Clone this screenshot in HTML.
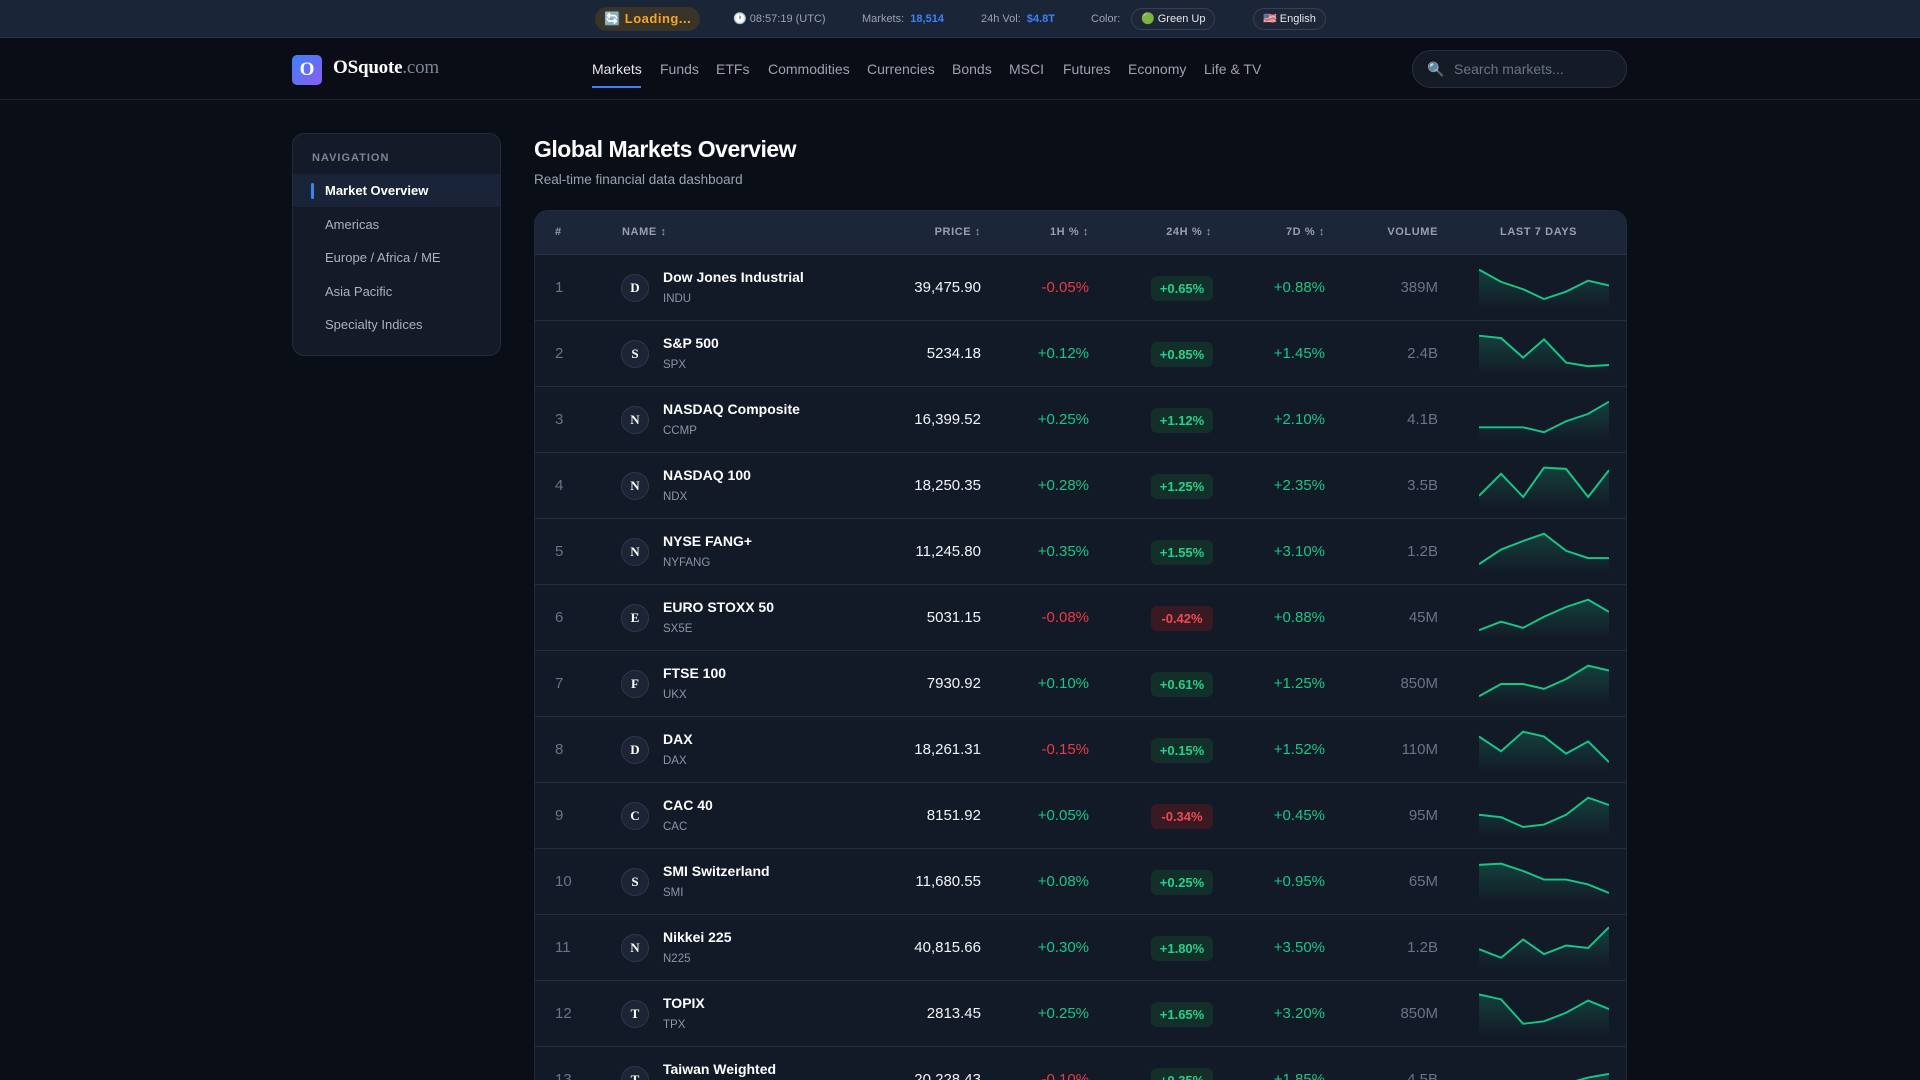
<!DOCTYPE html>
<html><head><meta charset="utf-8"><style>
*{margin:0;padding:0;box-sizing:border-box}
html{width:1920px;height:1080px;overflow:hidden}
body{width:1920px;height:1080px;overflow:hidden;background:#0a0e17;font-family:"Liberation Sans",sans-serif;color:#e5e7eb;position:relative}
.top{position:absolute;left:0;top:0;width:1920px;height:38px;background:#1b2538;border-bottom:1px solid #2a3448;font-size:12px;color:#9aa3b2}
.top>*{position:absolute;top:0;line-height:38px}
.pill{top:7px!important;height:24px;line-height:24px!important;border-radius:12px;padding:0 9px}
.hdr{position:absolute;left:0;top:39px;width:1920px;height:61px;border-bottom:1px solid #1c2230;background:#0a0d15}
.logo{position:absolute;left:292px;top:16px;width:30px;height:30px;border-radius:5px;background:linear-gradient(135deg,#3b82f6,#8b5cf6);color:#fff;font:bold 19px "Liberation Serif",serif;text-align:center;line-height:30px}
.brand{position:absolute;left:333px;top:18px;font:bold 19px "Liberation Serif",serif;color:#fff;letter-spacing:-.2px}
.brand span{color:#7c8596;font-weight:normal}
.nav a{position:absolute;top:22px;font-size:14px;color:#9aa3b2;text-decoration:none}
.nav a.act{color:#e5e7eb}
.search{position:absolute;left:1412px;top:11px;width:215px;height:38px;border-radius:19px;background:#141a26;border:1px solid #283043;font-size:14px;color:#6b7486;line-height:36px;padding-left:41px}
.side{position:absolute;left:292px;top:133px;width:209px;height:223px;border-radius:12px;background:#141a27;border:1px solid #232b3b}
.side .t{position:absolute;left:19px;top:18px;font-size:11px;font-weight:bold;letter-spacing:1px;color:#7c8596}
.side .i{position:absolute;left:0;width:207px;height:33px;line-height:33px;padding-left:32px;font-size:13px;color:#aab2c0}
.side .i.a{background:#1a2438;color:#fff;font-weight:bold}
.side .i.a:before{content:"";position:absolute;left:18px;top:9px;width:3px;height:16px;background:#3b82f6;border-radius:2px}
h1{position:absolute;left:534px;top:136px;font-size:23px;color:#fff;letter-spacing:-.5px}
.sub{position:absolute;left:534px;top:172px;font-size:13.5px;color:#9aa3b2}
.tbl{position:absolute;left:534px;top:210px;width:1093px;height:880px;border-radius:14px;background:#131a27;border:1px solid #242c3c;overflow:hidden}
.th{position:absolute;left:0;top:0;width:100%;height:44px;background:#1c2639;border-bottom:1px solid #2a3446;font-size:11px;font-weight:bold;letter-spacing:.6px;color:#97a0b0}
.th span{position:absolute;top:15px}
.r{position:absolute;left:0;width:100%;height:66px;border-bottom:1px solid #252d3c}
.r>*{position:absolute}
.n{left:20px;top:24px;font-size:15px;color:#6b7486}
.av{left:86px;top:19px;width:28px;height:28px;border-radius:50%;background:#1c2536;border:1px solid #2e384b;color:#fff;font:bold 13px "Liberation Serif",serif;text-align:center;line-height:26px}
.nm{left:128px;top:14px;font-size:14px;font-weight:bold;color:#fff}
.tk{left:128px;top:38px;font-size:11.5px;color:#8c95a5}
.p{right:645px;top:24px;font-size:15px;color:#f1f3f6}
.h{right:537px;top:24px;font-size:15px}
.b{left:616px;top:21px;width:62px;height:25px;border-radius:6px;font-size:13px;font-weight:bold;text-align:center;line-height:25px}
.g{color:#16c784}.rd{color:#ea3943}
.bg{background:#123029;color:#22d18b}.br{background:#3a1a22;color:#f04852}
.d{right:301px;top:24px;font-size:15px;color:#16c784}
.v{right:188px;top:24px;font-size:15px;color:#6b7486}
.sp{left:944px;top:0}
</style></head><body>
<div class="top">
<span class="pill" style="left:595px;background:#3a3428;color:#f5a623;font-weight:bold;font-size:13px;letter-spacing:.5px">🔄 Loading...</span>
<span style="left:733px;font-size:11px">🕐 08:57:19 (UTC)</span>
<span style="left:862px;font-size:11px">Markets:&nbsp; <b style="color:#3b82f6">18,514</b></span>
<span style="left:981px;font-size:11px">24h Vol:&nbsp; <b style="color:#3b82f6">$4.8T</b></span>
<span style="left:1091px;font-size:11px">Color:</span>
<span class="pill" style="left:1131px;height:22px;line-height:20px!important;top:8px!important;background:#1e2738;border:1px solid #354055;color:#e5e7eb;font-size:11px">🟢 Green Up</span>
<span class="pill" style="left:1253px;height:22px;line-height:20px!important;top:8px!important;background:#1e2738;border:1px solid #354055;color:#e5e7eb;font-size:11px">🇺🇸 English</span>
</div>
<div class="hdr">
<div class="logo">O</div><div class="brand">OSquote<span>.com</span></div>
<div class="nav">
<a class="act" style="left:592px">Markets</a><div style="position:absolute;left:592px;top:47px;width:49px;height:2px;background:#3b82f6"></div>
<a style="left:660px">Funds</a><a style="left:716px">ETFs</a><a style="left:768px">Commodities</a><a style="left:867px">Currencies</a><a style="left:952px">Bonds</a><a style="left:1009px">MSCI</a><a style="left:1063px">Futures</a><a style="left:1128px">Economy</a><a style="left:1204px">Life &amp; TV</a>
</div>
<div class="search"><span style="position:absolute;left:14px;top:0">🔍</span>Search markets...</div>
</div>
<div class="side"><div class="t">NAVIGATION</div>
<div class="i a" style="top:40px">Market Overview</div>
<div class="i" style="top:74px">Americas</div>
<div class="i" style="top:107px">Europe / Africa / ME</div>
<div class="i" style="top:141px">Asia Pacific</div>
<div class="i" style="top:174px">Specialty Indices</div>
</div>
<h1>Global Markets Overview</h1>
<div class="sub">Real-time financial data dashboard</div>
<div class="tbl">
<svg width="0" height="0" style="position:absolute"><defs><linearGradient id="gg" x1="0" y1="0" x2="0" y2="1"><stop offset="0" stop-color="#16c784" stop-opacity=".22"/><stop offset="1" stop-color="#16c784" stop-opacity="0"/></linearGradient></defs></svg>
<div class="th"><span style="left:20px">#</span><span style="left:87px">NAME ↕</span><span style="right:645px">PRICE ↕</span><span style="right:537px">1H % ↕</span><span style="right:414px">24H % ↕</span><span style="right:301px">7D % ↕</span><span style="right:188px">VOLUME</span><span style="left:965px">LAST 7 DAYS</span></div>

<div class="r" style="top:44px"><span class="n">1</span><span class="av">D</span><span class="nm">Dow Jones Industrial</span><span class="tk">INDU</span><span class="p">39,475.90</span><span class="h rd">-0.05%</span><span class="b bg">+0.65%</span><span class="d">+0.88%</span><span class="v">389M</span>
<svg class="sp" width="130" height="66" viewBox="0 0 106 54" preserveAspectRatio="none"><path d="M0 12L18 22L36 28L53 36L71 30L89 21L106 25V44H0Z" fill="url(#gg)"/><path d="M0 12L18 22L36 28L53 36L71 30L89 21L106 25" fill="none" stroke="#16c784" stroke-width="1.6"/></svg></div>

<div class="r" style="top:110px"><span class="n">2</span><span class="av">S</span><span class="nm">S&amp;P 500</span><span class="tk">SPX</span><span class="p">5234.18</span><span class="h g">+0.12%</span><span class="b bg">+0.85%</span><span class="d">+1.45%</span><span class="v">2.4B</span>
<svg class="sp" width="130" height="66" viewBox="0 0 106 54" preserveAspectRatio="none"><path d="M0 12L18 14L36 30L53 15L71 34L89 37L106 36V44H0Z" fill="url(#gg)"/><path d="M0 12L18 14L36 30L53 15L71 34L89 37L106 36" fill="none" stroke="#16c784" stroke-width="1.6"/></svg></div>

<div class="r" style="top:176px"><span class="n">3</span><span class="av">N</span><span class="nm">NASDAQ Composite</span><span class="tk">CCMP</span><span class="p">16,399.52</span><span class="h g">+0.25%</span><span class="b bg">+1.12%</span><span class="d">+2.10%</span><span class="v">4.1B</span>
<svg class="sp" width="130" height="66" viewBox="0 0 106 54" preserveAspectRatio="none"><path d="M0 33L18 33L36 33L53 37L71 28L89 22L106 12V44H0Z" fill="url(#gg)"/><path d="M0 33L18 33L36 33L53 37L71 28L89 22L106 12" fill="none" stroke="#16c784" stroke-width="1.6"/></svg></div>

<div class="r" style="top:242px"><span class="n">4</span><span class="av">N</span><span class="nm">NASDAQ 100</span><span class="tk">NDX</span><span class="p">18,250.35</span><span class="h g">+0.28%</span><span class="b bg">+1.25%</span><span class="d">+2.35%</span><span class="v">3.5B</span>
<svg class="sp" width="130" height="66" viewBox="0 0 106 54" preserveAspectRatio="none"><path d="M0 35L18 17L36 36L53 12L71 13L89 36L106 14V44H0Z" fill="url(#gg)"/><path d="M0 35L18 17L36 36L53 12L71 13L89 36L106 14" fill="none" stroke="#16c784" stroke-width="1.6"/></svg></div>

<div class="r" style="top:308px"><span class="n">5</span><span class="av">N</span><span class="nm">NYSE FANG+</span><span class="tk">NYFANG</span><span class="p">11,245.80</span><span class="h g">+0.35%</span><span class="b bg">+1.55%</span><span class="d">+3.10%</span><span class="v">1.2B</span>
<svg class="sp" width="130" height="66" viewBox="0 0 106 54" preserveAspectRatio="none"><path d="M0 37L18 25L36 18L53 12L71 26L89 32L106 32V44H0Z" fill="url(#gg)"/><path d="M0 37L18 25L36 18L53 12L71 26L89 32L106 32" fill="none" stroke="#16c784" stroke-width="1.6"/></svg></div>

<div class="r" style="top:374px"><span class="n">6</span><span class="av">E</span><span class="nm">EURO STOXX 50</span><span class="tk">SX5E</span><span class="p">5031.15</span><span class="h rd">-0.08%</span><span class="b br">-0.42%</span><span class="d">+0.88%</span><span class="v">45M</span>
<svg class="sp" width="130" height="66" viewBox="0 0 106 54" preserveAspectRatio="none"><path d="M0 37L18 30L36 35L53 26L71 18L89 12L106 22V44H0Z" fill="url(#gg)"/><path d="M0 37L18 30L36 35L53 26L71 18L89 12L106 22" fill="none" stroke="#16c784" stroke-width="1.6"/></svg></div>

<div class="r" style="top:440px"><span class="n">7</span><span class="av">F</span><span class="nm">FTSE 100</span><span class="tk">UKX</span><span class="p">7930.92</span><span class="h g">+0.10%</span><span class="b bg">+0.61%</span><span class="d">+1.25%</span><span class="v">850M</span>
<svg class="sp" width="130" height="66" viewBox="0 0 106 54" preserveAspectRatio="none"><path d="M0 37L18 27L36 27L53 31L71 23L89 12L106 16V44H0Z" fill="url(#gg)"/><path d="M0 37L18 27L36 27L53 31L71 23L89 12L106 16" fill="none" stroke="#16c784" stroke-width="1.6"/></svg></div>

<div class="r" style="top:506px"><span class="n">8</span><span class="av">D</span><span class="nm">DAX</span><span class="tk">DAX</span><span class="p">18,261.31</span><span class="h rd">-0.15%</span><span class="b bg">+0.15%</span><span class="d">+1.52%</span><span class="v">110M</span>
<svg class="sp" width="130" height="66" viewBox="0 0 106 54" preserveAspectRatio="none"><path d="M0 16L18 28L36 12L53 16L71 30L89 20L106 37V44H0Z" fill="url(#gg)"/><path d="M0 16L18 28L36 12L53 16L71 30L89 20L106 37" fill="none" stroke="#16c784" stroke-width="1.6"/></svg></div>

<div class="r" style="top:572px"><span class="n">9</span><span class="av">C</span><span class="nm">CAC 40</span><span class="tk">CAC</span><span class="p">8151.92</span><span class="h g">+0.05%</span><span class="b br">-0.34%</span><span class="d">+0.45%</span><span class="v">95M</span>
<svg class="sp" width="130" height="66" viewBox="0 0 106 54" preserveAspectRatio="none"><path d="M0 26L18 28L36 36L53 34L71 26L89 12L106 18V44H0Z" fill="url(#gg)"/><path d="M0 26L18 28L36 36L53 34L71 26L89 12L106 18" fill="none" stroke="#16c784" stroke-width="1.6"/></svg></div>

<div class="r" style="top:638px"><span class="n">10</span><span class="av">S</span><span class="nm">SMI Switzerland</span><span class="tk">SMI</span><span class="p">11,680.55</span><span class="h g">+0.08%</span><span class="b bg">+0.25%</span><span class="d">+0.95%</span><span class="v">65M</span>
<svg class="sp" width="130" height="66" viewBox="0 0 106 54" preserveAspectRatio="none"><path d="M0 13L18 12L36 18L53 25L71 25L89 29L106 36V44H0Z" fill="url(#gg)"/><path d="M0 13L18 12L36 18L53 25L71 25L89 29L106 36" fill="none" stroke="#16c784" stroke-width="1.6"/></svg></div>

<div class="r" style="top:704px"><span class="n">11</span><span class="av">N</span><span class="nm">Nikkei 225</span><span class="tk">N225</span><span class="p">40,815.66</span><span class="h g">+0.30%</span><span class="b bg">+1.80%</span><span class="d">+3.50%</span><span class="v">1.2B</span>
<svg class="sp" width="130" height="66" viewBox="0 0 106 54" preserveAspectRatio="none"><path d="M0 28L18 35L36 20L53 32L71 25L89 27L106 10V44H0Z" fill="url(#gg)"/><path d="M0 28L18 35L36 20L53 32L71 25L89 27L106 10" fill="none" stroke="#16c784" stroke-width="1.6"/></svg></div>

<div class="r" style="top:770px"><span class="n">12</span><span class="av">T</span><span class="nm">TOPIX</span><span class="tk">TPX</span><span class="p">2813.45</span><span class="h g">+0.25%</span><span class="b bg">+1.65%</span><span class="d">+3.20%</span><span class="v">850M</span>
<svg class="sp" width="130" height="66" viewBox="0 0 106 54" preserveAspectRatio="none"><path d="M0 11L18 15L36 35L53 33L71 26L89 16L106 23V44H0Z" fill="url(#gg)"/><path d="M0 11L18 15L36 35L53 33L71 26L89 16L106 23" fill="none" stroke="#16c784" stroke-width="1.6"/></svg></div>

<div class="r" style="top:836px"><span class="n">13</span><span class="av">T</span><span class="nm">Taiwan Weighted</span><span class="tk">TWSE</span><span class="p">20,228.43</span><span class="h rd">-0.10%</span><span class="b bg">+0.35%</span><span class="d">+1.85%</span><span class="v">4.5B</span>
<svg class="sp" width="130" height="66" viewBox="0 0 106 54" preserveAspectRatio="none"><path d="M0 44L18 42L36 36L53 33L71 30L89 25L106 22V54H0Z" fill="url(#gg)"/><path d="M0 44L18 42L36 36L53 33L71 30L89 25L106 22" fill="none" stroke="#16c784" stroke-width="1.6"/></svg></div>
</div>
</body></html>
